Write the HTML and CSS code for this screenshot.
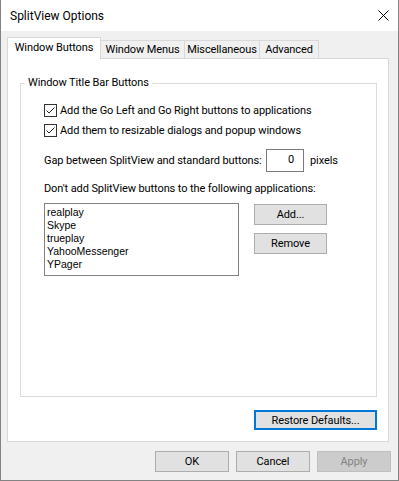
FILE: index.html
```html
<!DOCTYPE html>
<html lang="en">
  <head>
    <meta charset="UTF-8" />
    <title>SplitView Options</title>
    <link rel="stylesheet" href="styles.css">
  </head>
  <body>
    <div class="window">
      <div class="titlebar">
        <span class="title">SplitView Options</span>
        <svg class="close" width="11" height="11" viewBox="0 0 11 11">
          <path d="M0.5 0.5 L10.5 10.5 M10.5 0.5 L0.5 10.5" stroke="#000" stroke-width="1" fill="none" />
        </svg>
      </div>

      <div class="content">
        <div class="tabs">
          <div class="tab selected">Window Buttons</div>
          <div class="tab menus">Window Menus</div>
          <div class="tab misc">Miscellaneous</div>
          <div class="tab adv">Advanced</div>
        </div>

        <div class="panel">
          <div class="group">
            <div class="group-title">Window Title Bar Buttons</div>
            <div class="group-body">
              <div class="check first">
                <span class="box">
                  <svg width="11" height="11" viewBox="0 0 11 11"><path d="M1.5 5.5 L4 8 L9.5 2.5" stroke="#222" fill="none" /></svg>
                </span>
                <span>Add the Go Left and Go Right buttons to applications</span>
              </div>
              <div class="check">
                <span class="box">
                  <svg width="11" height="11" viewBox="0 0 11 11"><path d="M1.5 5.5 L4 8 L9.5 2.5" stroke="#222" fill="none" /></svg>
                </span>
                <span>Add them to resizable dialogs and popup windows</span>
              </div>

              <div class="gap-row">
                <span class="gap-label">Gap between SplitView and standard buttons:</span>
                <span class="num">0</span>
                <span class="unit">pixels</span>
              </div>

              <div class="note">Don't add SplitView buttons to the following applications:</div>

              <div class="list-row">
                <div class="list">
                  <div>realplay</div>
                  <div>Skype</div>
                  <div>trueplay</div>
                  <div>YahooMessenger</div>
                  <div>YPager</div>
                </div>
                <div class="side">
                  <button type="button" class="btn">Add...</button>
                  <button type="button" class="btn">Remove</button>
                </div>
              </div>
            </div>
          </div>

          <button type="button" class="btn restore">Restore Defaults...</button>
        </div>

        <div class="actions">
          <button type="button" class="btn">OK</button>
          <button type="button" class="btn">Cancel</button>
          <button type="button" class="btn disabled">Apply</button>
        </div>
      </div>
    </div>
  </body>
</html>
```

FILE: styles.css
```css
/* reset */
* {
  box-sizing: border-box;
  margin: 0;
  padding: 0;
}

body {
  font-family: Roboto, "Noto Sans", sans-serif;
  font-size: 11px;
  letter-spacing: -0.1px;
  color: #000;
  background: #fff;
}

/* dialog frame */
.window {
  width: 399px;
  height: 481px;
  border: 1px solid #838383;
  border-top: 0;
  background: #f0f0f0;
  display: flex;
  flex-direction: column;
}

.titlebar {
  height: 31px;
  background: #fff;
  display: flex;
  align-items: center;
  justify-content: space-between;
  padding: 0 9px 0 9px;
}

.title {
  font-size: 12px;
  letter-spacing: 0;
}

.content {
  flex: 1;
  padding: 6px 9px 0 6px;
}

/* tab strip */
.tabs {
  display: flex;
  align-items: flex-end;
  height: 21px;
}

.tab {
  height: 18px;
  border: 1px solid #d9d9d9;
  border-left: 0;
  border-bottom: 0;
  background: #f0f0f0;
  text-align: center;
  line-height: 18px;
  white-space: nowrap;
}

.tab.selected {
  position: relative;
  width: 94px;
  height: 22px;
  margin-bottom: -1px;
  border-left: 1px solid #d9d9d9;
  background: #fff;
  line-height: 20px;
}

.tab.menus { width: 84px; }
.tab.misc { width: 75px; }
.tab.adv { width: 59px; }

.panel {
  height: 384px;
  background: #fff;
  border: 1px solid #d9d9d9;
  padding: 0 11px 0 12px;
}

/* group box */
.group {
  margin-top: 24px;
  height: 314px;
  border: 1px solid #dcdcdc;
}

.group-title {
  width: fit-content;
  margin: -9px 0 0 4px;
  padding: 0 3px;
  background: #fff;
  line-height: 16px;
}

.group-body {
  padding-left: 23px;
}

.check {
  display: flex;
  align-items: center;
  gap: 3px;
  height: 20px;
  white-space: nowrap;
}

.check.first {
  margin-top: 9px;
}

.box {
  width: 13px;
  height: 13px;
  border: 1px solid #333;
  background: #fff;
  display: flex;
}

.gap-row {
  display: flex;
  align-items: center;
  height: 23px;
  margin-top: 9px;
  white-space: nowrap;
}

.gap-label {
  width: 222px;
}

.num {
  width: 38px;
  height: 23px;
  border: 1px solid #7a7a7a;
  text-align: right;
  padding-right: 9px;
  line-height: 20px;
}

.unit {
  margin-left: 6px;
}

.note {
  margin-top: 9px;
  line-height: 16px;
  white-space: nowrap;
}

.list-row {
  display: flex;
  margin-top: 6px;
}

.list {
  width: 195px;
  height: 73px;
  border: 1px solid #828282;
  padding: 2px 0 0 2px;
  font-family: "Liberation Sans", Arial, sans-serif;
  font-size: 10.5px;
  letter-spacing: 0;
  line-height: 13px;
}

.side {
  display: flex;
  flex-direction: column;
  gap: 8px;
  margin-left: 15px;
  padding-top: 1px;
}

/* push buttons */
.btn {
  width: 73px;
  height: 21px;
  background: #e1e1e1;
  border: 1px solid #adadad;
  font: inherit;
  letter-spacing: inherit;
  color: #000;
}

.restore {
  display: block;
  width: 123px;
  height: 20px;
  margin: 13px 0 0 auto;
  border: 2px solid #0078d7;
}

.actions {
  display: flex;
  justify-content: flex-end;
  gap: 7px;
  margin: 9px -2px 0 0;
}

.actions .btn {
  width: 74px;
}

.btn.disabled {
  background: #cccccc;
  border-color: #bfbfbf;
  color: #838383;
}
```
